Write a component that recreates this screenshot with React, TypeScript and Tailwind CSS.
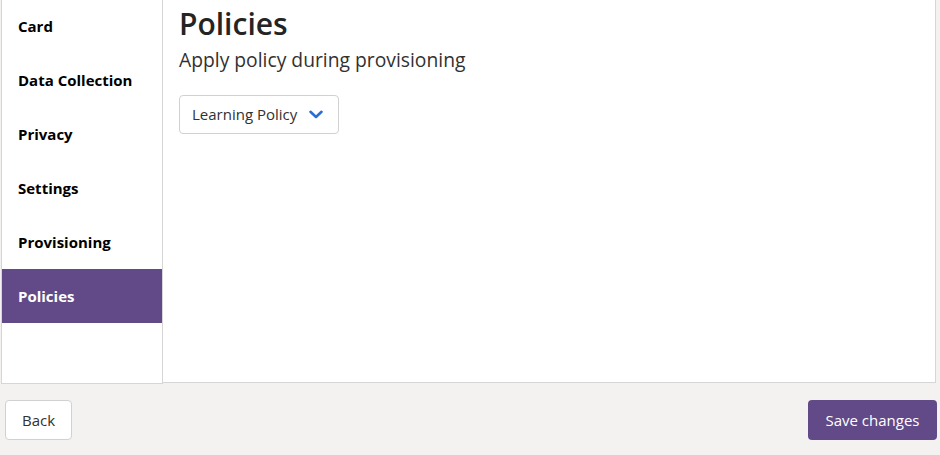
const NAV_ITEMS = ['Card', 'Data Collection', 'Privacy', 'Settings', 'Provisioning', 'Policies'];

function Chevron() {
  return (
    <svg width="14" height="9" viewBox="0 0 14 9" fill="none" className="text-[#2b6fd6]">
      <path d="M1.5 1.8 7 7 12.5 1.8" stroke="currentColor" strokeWidth="2.6" strokeLinecap="round" strokeLinejoin="round" />
    </svg>
  );
}

export default function App() {
  const active = 'Policies';

  return (
    <div className="w-[940px] h-[455px] bg-[#f3f2f1] overflow-hidden font-['Open_Sans',sans-serif] text-[#323130]">
      <div className="flex h-[384px]">
        <aside className="w-[162px] h-[384px] ml-px bg-white border-x border-b border-[#d6d6d6] flex-shrink-0">
          <ul className="-mt-px">
            {NAV_ITEMS.map((item) => (
              <li
                key={item}
                className={
                  item === active
                    ? 'h-[54px] flex items-center pl-4 bg-[#614a87] text-white text-[15px] font-bold'
                    : 'h-[54px] flex items-center pl-4 text-black text-[15px] font-bold'
                }
              >
                {item}
              </li>
            ))}
          </ul>
        </aside>
        <main className="w-[773px] h-[383px] bg-white border-r border-b border-[#d6d6d6] pl-4">
          <h1 className="text-[30px] font-semibold leading-[40px] text-[#242424] mt-[4px]">Policies</h1>
          <p className="text-[19.3px] leading-[26px] text-[#323130] mt-[3px]">Apply policy during provisioning</p>
          <button className="mt-[22px] h-[39px] w-[160px] flex items-center pl-[12px] gap-[12px] bg-white border border-[#d1d1d1] rounded-[4px] text-[15px] text-[#323130]">
            <span>Learning Policy</span>
            <Chevron />
          </button>
        </main>
      </div>
      <div className="flex justify-between items-center pl-[5px] pr-[3px] mt-[16px]">
        <button className="h-[40px] w-[67px] bg-white border border-[#d1d1d1] rounded-[4px] text-[15px] text-[#323130]">
          Back
        </button>
        <button className="h-[40px] w-[129px] bg-[#614a87] rounded-[4px] text-[15px] text-white">
          Save changes
        </button>
      </div>
    </div>
  );
}
